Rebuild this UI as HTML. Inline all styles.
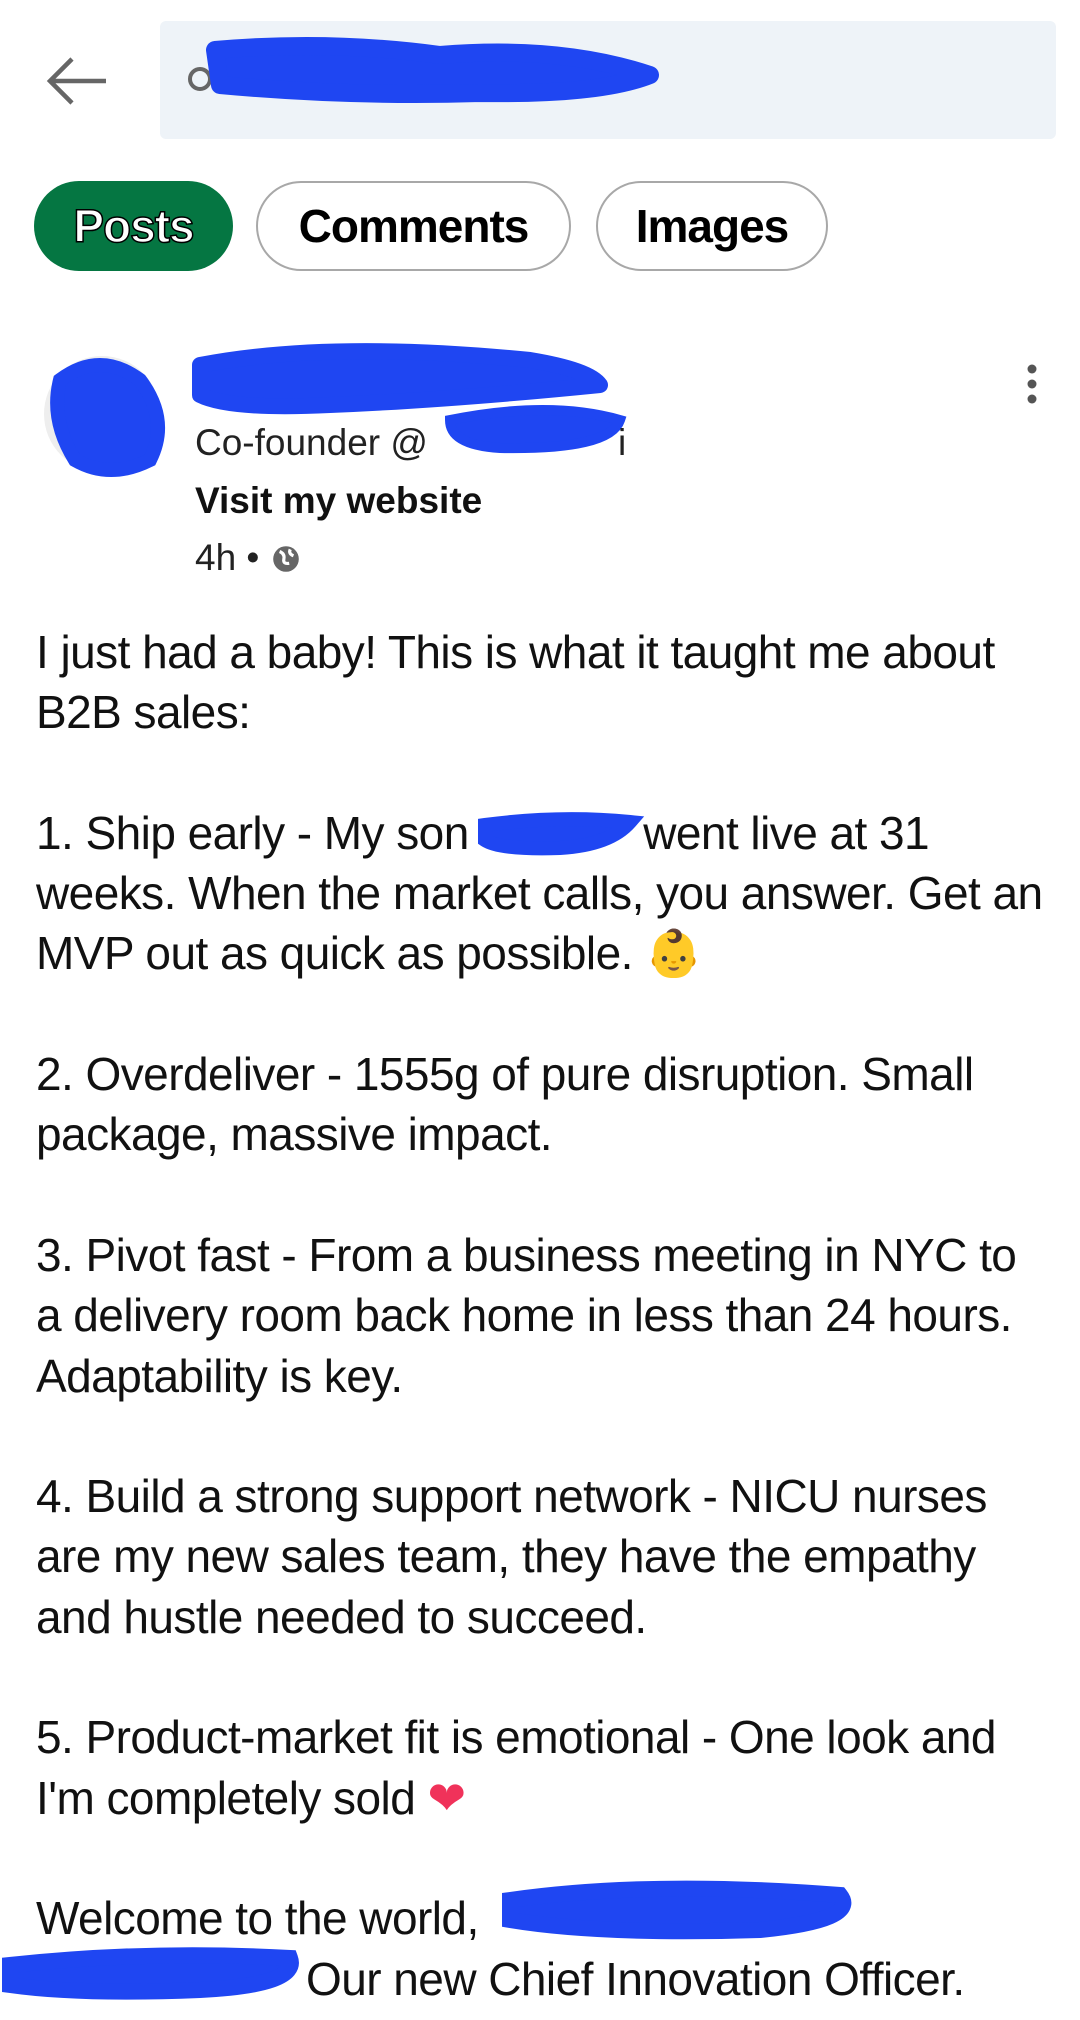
<!DOCTYPE html>
<html><head><meta charset="utf-8"><style>
*{margin:0;padding:0;box-sizing:border-box}
body{width:1080px;height:2020px;background:#fff;font-family:"Liberation Sans",sans-serif;color:#000;position:relative;overflow:hidden}
.abs{position:absolute}
.search{left:160px;top:21px;width:896px;height:118px;background:#eef3f8;border-radius:6px}
.chip{position:absolute;top:181px;height:90px;border-radius:45px;border:2.5px solid #a8a8a8;font-size:46px;font-weight:bold;display:flex;align-items:center;justify-content:center;letter-spacing:-1px}
.posts{left:34px;width:199px;background:#057642;border:none;color:#fff;-webkit-text-stroke:1.5px #000}
.body{left:36px;top:622px;font-size:46px;line-height:60.3px;width:1044px;letter-spacing:-0.55px;color:#111;white-space:nowrap}
.meta{left:195px;font-size:37px;color:#222}
</style></head><body>
<svg class="abs" style="left:44px;top:55px" width="68" height="50" viewBox="0 0 68 50"><path d="M62 26H8M28 4L6 26l22 22" fill="none" stroke="#666" stroke-width="4.5"/></svg>
<div class="abs search"></div>
<svg class="abs" style="left:180px;top:25px" width="520" height="90" viewBox="0 0 520 90"><circle cx="20" cy="54" r="10" fill="none" stroke="#666" stroke-width="4"/><path d="M35 25 Q150 15 260 30 Q380 20 470 50 Q420 70 300 68 Q170 72 40 60 Z" fill="#1f46f2" stroke="#1f46f2" stroke-width="18" stroke-linejoin="round"/></svg>
<div class="chip posts">Posts</div>
<div class="chip" style="left:256px;width:315px">Comments</div>
<div class="chip" style="left:596px;width:232px">Images</div>
<svg class="abs" style="left:30px;top:340px" width="680" height="140" viewBox="0 0 680 140"><circle cx="72" cy="74" r="58" fill="#eee"/><path d="M30 40 Q70 10 110 40 Q140 80 120 120 Q80 140 45 120 Q20 80 30 40Z" fill="#1f46f2" stroke="#1f46f2" stroke-width="14"/><path d="M170 25 Q300 0 500 20 Q560 30 570 45 Q420 60 300 65 Q200 70 170 55Z" fill="#1f46f2" stroke="#1f46f2" stroke-width="16" stroke-linejoin="round"/><path d="M420 80 Q520 60 590 80 Q580 110 470 108 Q420 105 420 80Z" fill="#1f46f2" stroke="#1f46f2" stroke-width="10"/></svg>
<div class="abs meta" style="top:422px">Co-founder @<span style="display:inline-block;width:190px"></span>i</div>
<div class="abs meta" style="top:480px;font-weight:bold;color:#111">Visit my website</div>
<div class="abs meta" style="top:537px">4h • <svg width="32" height="32" viewBox="0 0 30 30" style="vertical-align:-5px"><circle cx="15" cy="15" r="12" fill="#666"/><path d="M9 8q5 2 4 7t5 4M19 6q-2 4 3 6" fill="none" stroke="#fff" stroke-width="3"/></svg></div>
<svg class="abs" style="left:1020px;top:362px" width="24" height="46" viewBox="0 0 24 46"><circle cx="12" cy="7" r="4.5" fill="#555"/><circle cx="12" cy="22" r="4.5" fill="#555"/><circle cx="12" cy="37" r="4.5" fill="#555"/></svg>
<div class="abs body">I just had a baby! This is what it taught me about<br>B2B sales:<br><br>1. Ship early - My son <span style="display:inline-block;width:150px"></span> went live at 31<br>weeks. When the market calls, you answer. Get an<br>MVP out as quick as possible. 👶<br><br>2. Overdeliver - 1555g of pure disruption. Small<br>package, massive impact.<br><br>3. Pivot fast - From a business meeting in NYC to<br>a delivery room back home in less than 24 hours.<br>Adaptability is key.<br><br>4. Build a strong support network - NICU nurses<br>are my new sales team, they have the empathy<br>and hustle needed to succeed.<br><br>5. Product-market fit is emotional - One look and<br>I'm completely sold <span style="color:#f0325a">❤</span><br><br>Welcome to the world, <span style="display:inline-block;width:360px"></span><br><span style="display:inline-block;width:270px"></span>Our new Chief Innovation Officer.</div>
<svg class="abs" style="left:0;top:810px" width="1080" height="1210" viewBox="0 810 1080 1210"><path d="M485 825 Q560 815 630 822 Q610 845 560 848 Q500 850 485 840Z" fill="#1f46f2" stroke="#1f46f2" stroke-width="14"/><path d="M510 1900 Q650 1880 840 1895 Q860 1920 760 1930 Q600 1935 510 1920Z" fill="#1f46f2" stroke="#1f46f2" stroke-width="16"/><path d="M10 1965 Q150 1950 290 1958 Q300 1985 200 1990 Q80 1995 10 1985Z" fill="#1f46f2" stroke="#1f46f2" stroke-width="16"/></svg>
</body></html>
